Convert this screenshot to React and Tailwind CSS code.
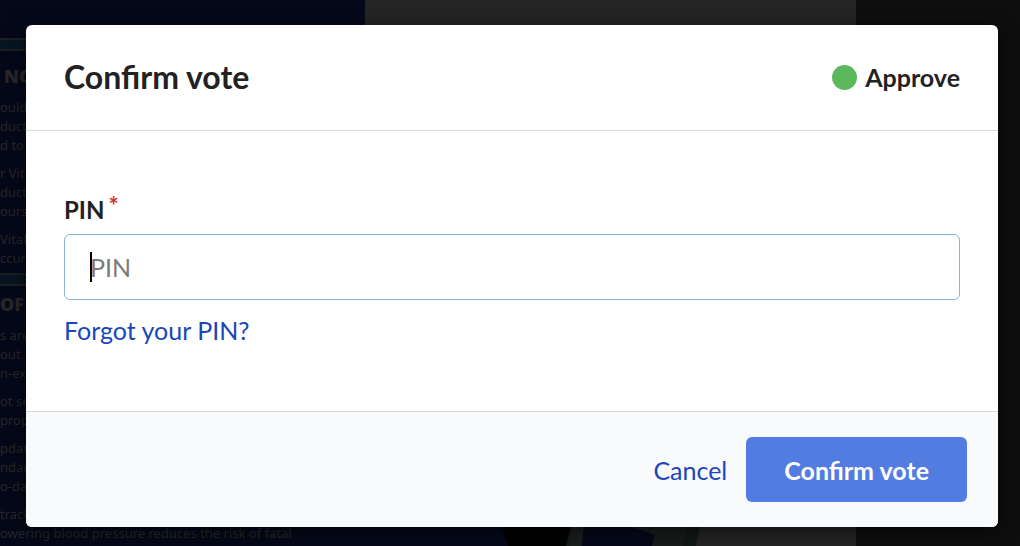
import { useState } from 'react'

const sections = [
  {
    title: 'NO',
    heading: 'pt-[15px] pb-3 pl-1',
    paragraphs: [
      ['ould', 'ducts', 'd to'],
      ['r Vit', 'duct', 'ourse'],
      ['Vitali', 'ccurs'],
    ],
  },
  {
    title: 'OF',
    heading: 'pt-2 pb-3',
    paragraphs: [
      ['s are', 'out. I', 'n-exc'],
      ['ot sel', 'prop'],
      ['pdat', 'ndard', 'o-dat'],
      ['track', 'owering blood pressure reduces the risk of fatal'],
    ],
  },
]

function PageBehind() {
  return (
    <div aria-hidden="true" className="absolute inset-0 flex overflow-hidden bg-[#0e0e0e]">
      <div className="w-[365px] shrink-0 bg-[#050819] pt-[38px] font-['Noto_Sans','Open_Sans',sans-serif] text-[#272728]">
        {sections.map((section) => (
          <div key={section.title}>
            <div className="h-[13px] border-y-2 border-[#1d1f22] bg-[#071521]" />
            <p className={`text-lg leading-5 font-black ${section.heading}`}>{section.title}</p>
            <div className="mb-[5px] flex flex-col gap-[9px] text-[13px] leading-[19px] whitespace-nowrap">
              {section.paragraphs.map((lines) => (
                <div key={lines[0]}>
                  {lines.map((line) => (
                    <p key={line}>{line}</p>
                  ))}
                </div>
              ))}
            </div>
          </div>
        ))}
      </div>
      <div className="flex w-[491px] shrink-0 flex-col justify-end bg-[#252525]">
        <svg className="block h-5 w-full" viewBox="0 0 491 20" preserveAspectRatio="none">
          <path d="M0 0H300V20H0Z" fill="#050819" />
          <path d="M137 0H206L203 20H143Q140 12 137 0Z" fill="#020202" />
          <path d="M206 0H219L217 20H201Z" fill="#171a1c" />
          <path d="M208 0H220L217 20H204Z" fill="#1b1e1f" />
          <path d="M219 0H264L290 9L287 20H217Z" fill="#050819" />
          <path d="M264 0H298L291 20H287L290 9Z" fill="#1b1e1c" />
          <path d="M296 0H335L331 20H289Z" fill="#171c1a" />
          <path d="M324 0H334L330 20H318Z" fill="#121816" />
        </svg>
      </div>
    </div>
  )
}

function App() {
  const [pin, setPin] = useState('')

  return (
    <div className="relative min-h-screen font-[Lato,sans-serif] text-[#222222]">
      <PageBehind />

      <div className="relative pt-[25px] pr-[22px] pb-[19px] pl-[26px]">
        <form
          role="dialog"
          aria-labelledby="dialog-title"
          onSubmit={(e) => e.preventDefault()}
          className="overflow-hidden rounded-md bg-white shadow-[0_4px_20px_rgba(0,0,0,0.6)]"
        >
          <header className="flex items-center justify-between border-b border-[#d9dbdd] px-[38px] pt-8 pb-[33px]">
            <h1 id="dialog-title" className="text-[32px] leading-10 font-bold">Confirm vote</h1>
            <div className="flex items-center gap-2">
              <span className="size-[25px] rounded-full bg-[#5cb85c]" />
              <span className="text-[25px] leading-8 font-bold">Approve</span>
            </div>
          </header>

          <div className="px-[38px] pt-[63px] pb-[65px]">
            <label htmlFor="pin" className="flex gap-1 text-[24px] leading-8 font-bold">
              PIN
              <span className="-mt-1 text-[#d0342c]">*</span>
            </label>
            <div className="relative mt-2">
              <input
                id="pin"
                type="text"
                placeholder="PIN"
                value={pin}
                onChange={(e) => setPin(e.target.value)}
                className="block h-[66px] w-full rounded-md border border-[#8ab4dc] bg-white px-[25px] text-[25px] outline-none placeholder:text-[#7b7b7b]"
              />
              {pin === '' && <span className="pointer-events-none absolute top-[18px] left-[26px] h-[30px] w-0.5 bg-black" />}
            </div>
            <a href="#forgot" className="mt-3.5 block w-fit text-[25px] leading-8 text-[#1947ba]">
              Forgot your PIN?
            </a>
          </div>

          <footer className="flex items-center justify-end gap-[19px] border-t border-[#d5d9dc] bg-[#f9fafc] px-[31px] py-[25px]">
            <button type="button" className="text-[25px] leading-8 text-[#1947ba]">
              Cancel
            </button>
            <button type="submit" className="h-[65px] rounded-md bg-[#527cdf] px-[38px] text-[25px] leading-8 font-bold text-white">
              Confirm vote
            </button>
          </footer>
        </form>
      </div>
    </div>
  )
}

export default App
